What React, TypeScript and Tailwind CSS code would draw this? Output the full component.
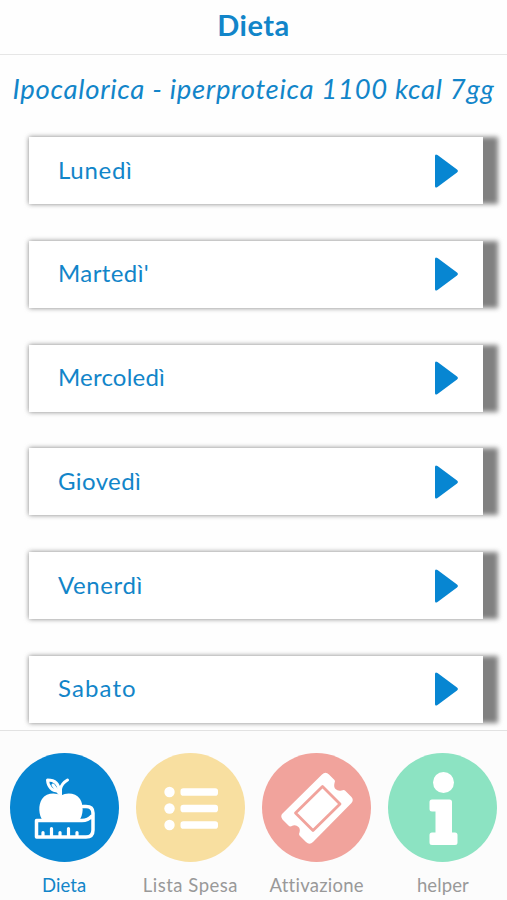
import { useState } from 'react';
import clsx from 'clsx';

const giorni = [
  { label: 'Lunedì', spacing: 'tracking-[0.7px]' },
  { label: "Martedì'", spacing: 'tracking-[0.4px]' },
  { label: 'Mercoledì', spacing: 'tracking-[0.2px]' },
  { label: 'Giovedì', spacing: 'tracking-[0.4px]' },
  { label: 'Venerdì', spacing: 'tracking-[0.6px]' },
  { label: 'Sabato', spacing: 'tracking-[1.1px]' },
];

function DietaIcon() {
  return (
    <svg viewBox="0 0 109 109" className="h-full w-full" fill="none" stroke="white" strokeLinecap="round" strokeLinejoin="round">
      {/* foglia e picciolo */}
      <path d="M49 38C49 31 45 27 37.500 27C38 34 42 38.500 49 38Z" strokeWidth="3" />
      <path d="M43 32L50.500 42V36C51.500 31 54 29 57.500 27" strokeWidth="3" />
      {/* mela */}
      <path d="M51 42.500C57 39 66 40 70 46C74 52 73.500 62 69 68H33C28.500 62 28 52 32 46C36 40 45 39 51 42.500Z" fill="white" stroke="none" />
      {/* metro */}
      <path d="M73 53.500H76Q83 53.500 83 60V77Q83 84 76 84H26.500V67.500H72Q78 67.500 82 63" strokeWidth="3.500" />
      <path d="M33 83.500V79.500M41.500 83.500V75.500M50 83.500V79.500M58.500 83.500V75.500M67 83.500V79.500" strokeWidth="3.200" />
    </svg>
  );
}

function ListaIcon() {
  return (
    <svg viewBox="0 0 109 109" className="h-full w-full" fill="white">
      {[39, 55.5, 72].map((y) => (
        <g key={y}>
          <circle cx="33.500" cy={y} r="5.200" />
          <rect x="44.500" y={y - 3.7} width="37.500" height="7.400" rx="2.800" />
        </g>
      ))}
    </svg>
  );
}

function TicketIcon() {
  return (
    <svg viewBox="0 0 109 109" className="h-full w-full">
      <path
        fill="white"
        d="M60 21.500Q63.500 18 67 21.500L72.500 27Q73.500 28 72.500 30Q71.500 34 73.500 36Q76 38.500 79.500 37.500Q82 36.500 83 37.500L89.500 44Q92 47 89.500 50L51 89Q47.500 92.500 44 89L37.500 82.500Q36.500 81 37.500 79.500Q38.500 76 36.500 74Q34 71.500 31 72.500Q28 74 27 73L20.500 66.500Q18 63 20.500 60.500Z"
      />
      <path d="M60.500 33.500L78 51L51 77.500L33.500 60Z" fill="none" stroke="#f1a39c" strokeWidth="2.800" strokeLinejoin="round" />
    </svg>
  );
}

function HelperIcon() {
  return (
    <svg viewBox="0 0 109 109" className="h-full w-full" fill="white">
      <circle cx="55.500" cy="29.500" r="10.500" />
      <path d="M44 46.500H61.500Q64 46.500 64 49V79.500H67Q69.500 79.500 69.500 82V89.500Q69.500 92 67 92H44Q41.500 92 41.500 89.500V82Q41.500 79.500 44 79.500H47.500V58.500H44Q41.500 58.500 41.500 56V49Q41.500 46.500 44 46.500Z" />
    </svg>
  );
}

const tabs = [
  { label: 'Dieta', color: 'bg-[#0786d2]', spacing: 'tracking-[0.1px]', Icon: DietaIcon },
  { label: 'Lista Spesa', color: 'bg-[#f8dfa0]', spacing: 'tracking-[0.5px]', Icon: ListaIcon },
  { label: 'Attivazione', color: 'bg-[#f1a39c]', spacing: 'tracking-[0.25px]', Icon: TicketIcon },
  { label: 'helper', color: 'bg-[#8ce3c2]', spacing: 'tracking-[0.1px]', Icon: HelperIcon },
];

export default function App() {
  const [active, setActive] = useState('Dieta');

  return (
    <div className="flex h-[900px] w-[507px] flex-col overflow-hidden bg-[#fefefe] font-['Lato',sans-serif] text-[#1285c9]">
      <header className="flex h-[55px] shrink-0 items-center justify-center border-b border-[#e6e6e6] pb-1">
        <h1 className="text-[29px] font-bold tracking-[0.5px]">Dieta</h1>
      </header>

      <main className="min-h-0 flex-1 overflow-hidden">
        <h2 className="flex h-[82px] items-center justify-center pb-3.5 text-[27.5px] italic tracking-[0.7px] whitespace-nowrap">
          Ipocalorica - iperproteica 1100 kcal 7gg
        </h2>
        <div className="flex flex-col gap-[36.8px] pl-[29px]">
          {giorni.map(({ label, spacing }) => (
            <div key={label} className="relative w-[454px] shrink-0">
              {/* Ombra, sporge a destra della scheda */}
              <span className="absolute inset-y-0 -right-[14.5px] left-0 bg-[#808080] blur-[2.5px]" />
              <button className="relative flex h-[67px] w-full items-center justify-between bg-white pr-[25px] pl-[29px]">
                <span className={clsx('pb-0.5 text-[24px]', spacing)}>{label}</span>
                <svg width="23" height="34" viewBox="0 0 23 34" fill="#0786d2">
                  <path d="M0 2Q0 -0.500 2.500 1L22 15.500Q23.800 17 22 18.500L2.500 33Q0 34.500 0 32Z" />
                </svg>
              </button>
            </div>
          ))}
        </div>
      </main>

      <nav className="relative grid h-[170px] shrink-0 grid-cols-4 border-t border-[#e2e2e2] bg-[#fcfcfc] px-px">
        {tabs.map(({ label, color, spacing, Icon }) => (
          <button key={label} onClick={() => setActive(label)} className="flex flex-col items-center pt-[22px]">
            <span className={clsx('h-[109px] w-[109px] rounded-full', color)}>
              <Icon />
            </span>
            <span
              className={clsx(
                'mt-[11px] text-[18.5px] leading-[24px] whitespace-nowrap',
                spacing,
                active === label ? 'text-[#1285c9]' : 'text-[#999999]'
              )}
            >
              {label}
            </span>
          </button>
        ))}
      </nav>
    </div>
  );
}
